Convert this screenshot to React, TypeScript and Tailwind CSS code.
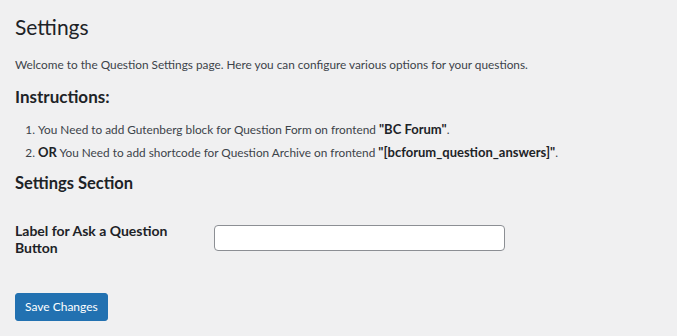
import { useState } from "react";

const App = () => {
  const [label, setLabel] = useState("");

  return (
    <div
      className="min-h-[336px] w-full bg-[#f0f0f1] text-[#3c434a] pl-[15px] pr-5 pt-[9px]"
      style={{ fontFamily: 'Lato, "Noto Sans", sans-serif' }}
    >
      <h1 className="text-[21px] leading-[29px] font-normal text-[#1d2327] pt-[3px] pb-[4px]">Settings</h1>

      <p className="text-[11.8px] leading-[20px] mt-[10px]">
        Welcome to the Question Settings page. Here you can configure various options for your questions.
      </p>

      <h2 className="text-[17px] font-bold text-[#1d2327] mt-[11px] leading-[22px]">Instructions:</h2>

      <ol className="list-decimal pl-[23px] mt-[11px] text-[11.8px] leading-[20px] space-y-[2px]">
        <li>
          You Need to add Gutenberg block for Question Form on frontend{" "}
          <strong className="text-[#1d2327] text-[13px]">"BC Forum"</strong>.
        </li>
        <li>
          <strong className="text-[#1d2327] text-[13px]">OR</strong> You Need to add shortcode for Question Archive on
          frontend <strong className="text-[#1d2327] text-[13px]">"[bcforum_question_answers]"</strong>.
        </li>
      </ol>

      <h2 className="text-[16.5px] font-bold text-[#1d2327] mt-[10px] leading-[20px]">Settings Section</h2>

      <div className="flex items-start mt-[29px]">
        <div className="w-[199px]">
          <label
            htmlFor="ask-label"
            className="block w-[165px] text-[14px] font-bold leading-[17px] text-[#1d2327]"
          >
            Label for Ask a Question Button
          </label>
        </div>
        <input
          id="ask-label"
          type="text"
          value={label}
          onChange={(e) => setLabel(e.target.value)}
          className="mt-[3px] w-[291px] h-[26px] bg-white border border-[#8c8f94] rounded-[4px] px-2 text-[13px] outline-none"
        />
      </div>

      <button className="mt-[37px] h-[28px] px-[9px] bg-[#2271b1] text-white text-[12px] rounded-[3px] border border-[#2271b1]">
        Save Changes
      </button>
    </div>
  );
};

export default App;
